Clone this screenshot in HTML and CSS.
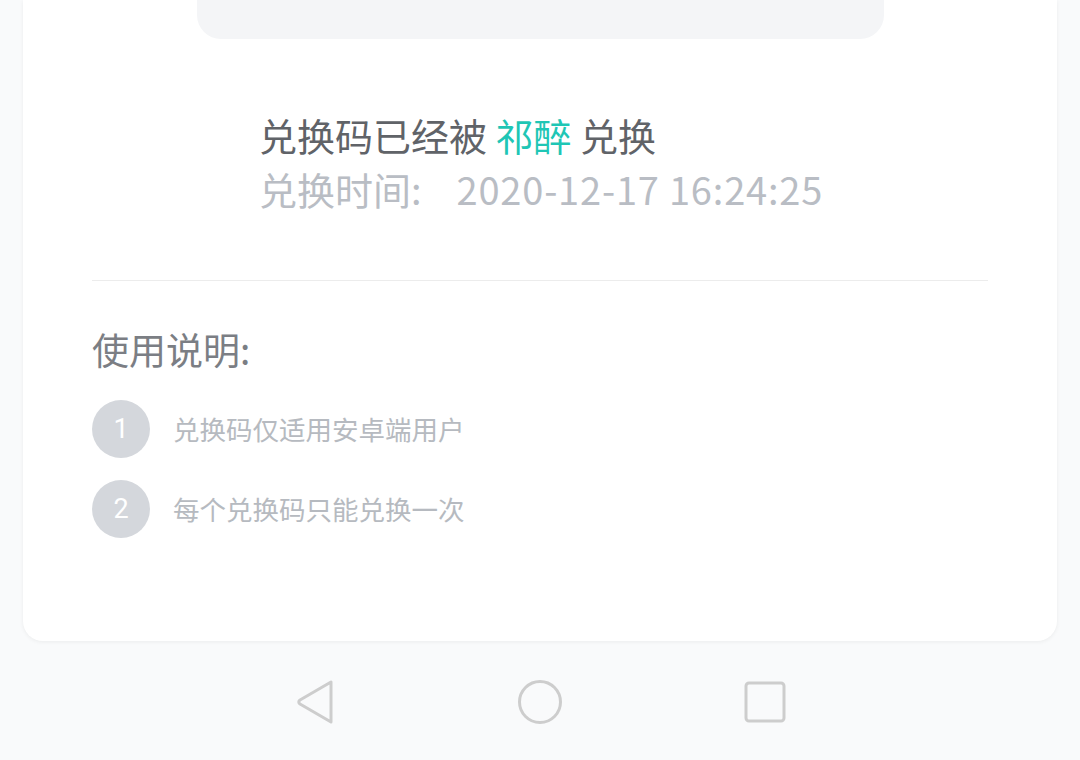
FILE: index.html
```html
<!DOCTYPE html>
<html lang="zh-CN">
<head>
    <meta charset="UTF-8">
    <meta name="viewport" content="width=device-width, initial-scale=1.0">
    <title>兑换码</title>
    <link rel="stylesheet" href="styles.css">
</head>
<body>
    <div class="page">
        <div class="card">
            <div class="code-box"></div>

            <div class="redeem-info">
                <p class="redeem-user">兑换码已经被 <span class="user-name">祁醉</span> 兑换</p>
                <p class="redeem-time"><span class="time-label">兑换时间:</span><span class="time-value">2020-12-17 16:24:25</span></p>
            </div>

            <div class="divider"></div>

            <div class="usage">
                <h2>使用说明:</h2>
                <ul class="usage-list">
                    <li><span class="num">1</span>兑换码仅适用安卓端用户</li>
                    <li><span class="num">2</span>每个兑换码只能兑换一次</li>
                </ul>
            </div>
        </div>

        <div class="nav-bar">
            <div class="nav-btn">
                <svg width="44" height="48" viewBox="0 0 44 48">
                    <path d="M38 4 L38 44 L7 26 Q4.5 24 7 22 Z" fill="none" stroke="#cdcdcd" stroke-width="3" stroke-linejoin="round"/>
                </svg>
            </div>
            <div class="nav-btn">
                <svg width="48" height="48" viewBox="0 0 48 48">
                    <circle cx="24" cy="24" r="20.5" fill="none" stroke="#cdcdcd" stroke-width="3"/>
                </svg>
            </div>
            <div class="nav-btn">
                <svg width="44" height="44" viewBox="0 0 44 44">
                    <rect x="3" y="3" width="38" height="38" rx="3" fill="none" stroke="#cdcdcd" stroke-width="3"/>
                </svg>
            </div>
        </div>
    </div>
</body>
</html>
```

FILE: styles.css
```css
* {
    box-sizing: border-box;
    margin: 0;
    padding: 0;
}

body {
    font-family: "Noto Sans CJK SC", "Noto Sans", sans-serif;
    background-color: #f9fafb;
    color: #5f6267;
}

.page {
    width: 1080px;
    height: 760px;
    overflow: hidden;
}

.card {
    margin: 0 23px;
    padding: 0 69px 103px;
    background-color: #ffffff;
    border-radius: 0 0 20px 20px;
    box-shadow: 0 1px 4px rgba(0, 0, 0, 0.06);
}

.code-box {
    height: 39px;
    margin: 0 104px 0 105px;
    background-color: #f4f5f7;
    border-radius: 0 0 24px 24px;
}

.redeem-info {
    margin-top: 69px;
    padding-left: 167px;
    font-size: 38px;
    line-height: 54px;
}

.redeem-user {
    color: #606368;
}

.user-name {
    color: #1fc6b5;
}

.redeem-time {
    color: #b9bdc4;
}

.time-label {
    margin-right: 35px;
}

.time-value {
    letter-spacing: 0.8px;
}

.divider {
    height: 1px;
    margin-top: 64px;
    background-color: #ececec;
}

.usage h2 {
    margin-top: 43px;
    font-size: 37px;
    font-weight: normal;
    line-height: 50px;
    color: #7b7e84;
}

.usage-list {
    list-style: none;
    margin-top: 26px;
}

.usage-list li {
    display: flex;
    align-items: center;
    height: 58px;
    margin-bottom: 22px;
    font-size: 26.5px;
    line-height: 1;
    color: #b6bac0;
}

.usage-list li:last-child {
    margin-bottom: 0;
}

.num {
    display: flex;
    align-items: center;
    justify-content: center;
    width: 58px;
    height: 58px;
    margin-right: 23px;
    border-radius: 50%;
    background-color: #d4d7dc;
    color: #ffffff;
    font-family: Roboto, "Noto Sans", sans-serif;
    font-size: 27px;
}

.nav-bar {
    display: flex;
    justify-content: center;
    align-items: center;
    height: 120px;
    padding-top: 2px;
}

.nav-btn {
    display: flex;
    justify-content: center;
    align-items: center;
    width: 225px;
}
```
